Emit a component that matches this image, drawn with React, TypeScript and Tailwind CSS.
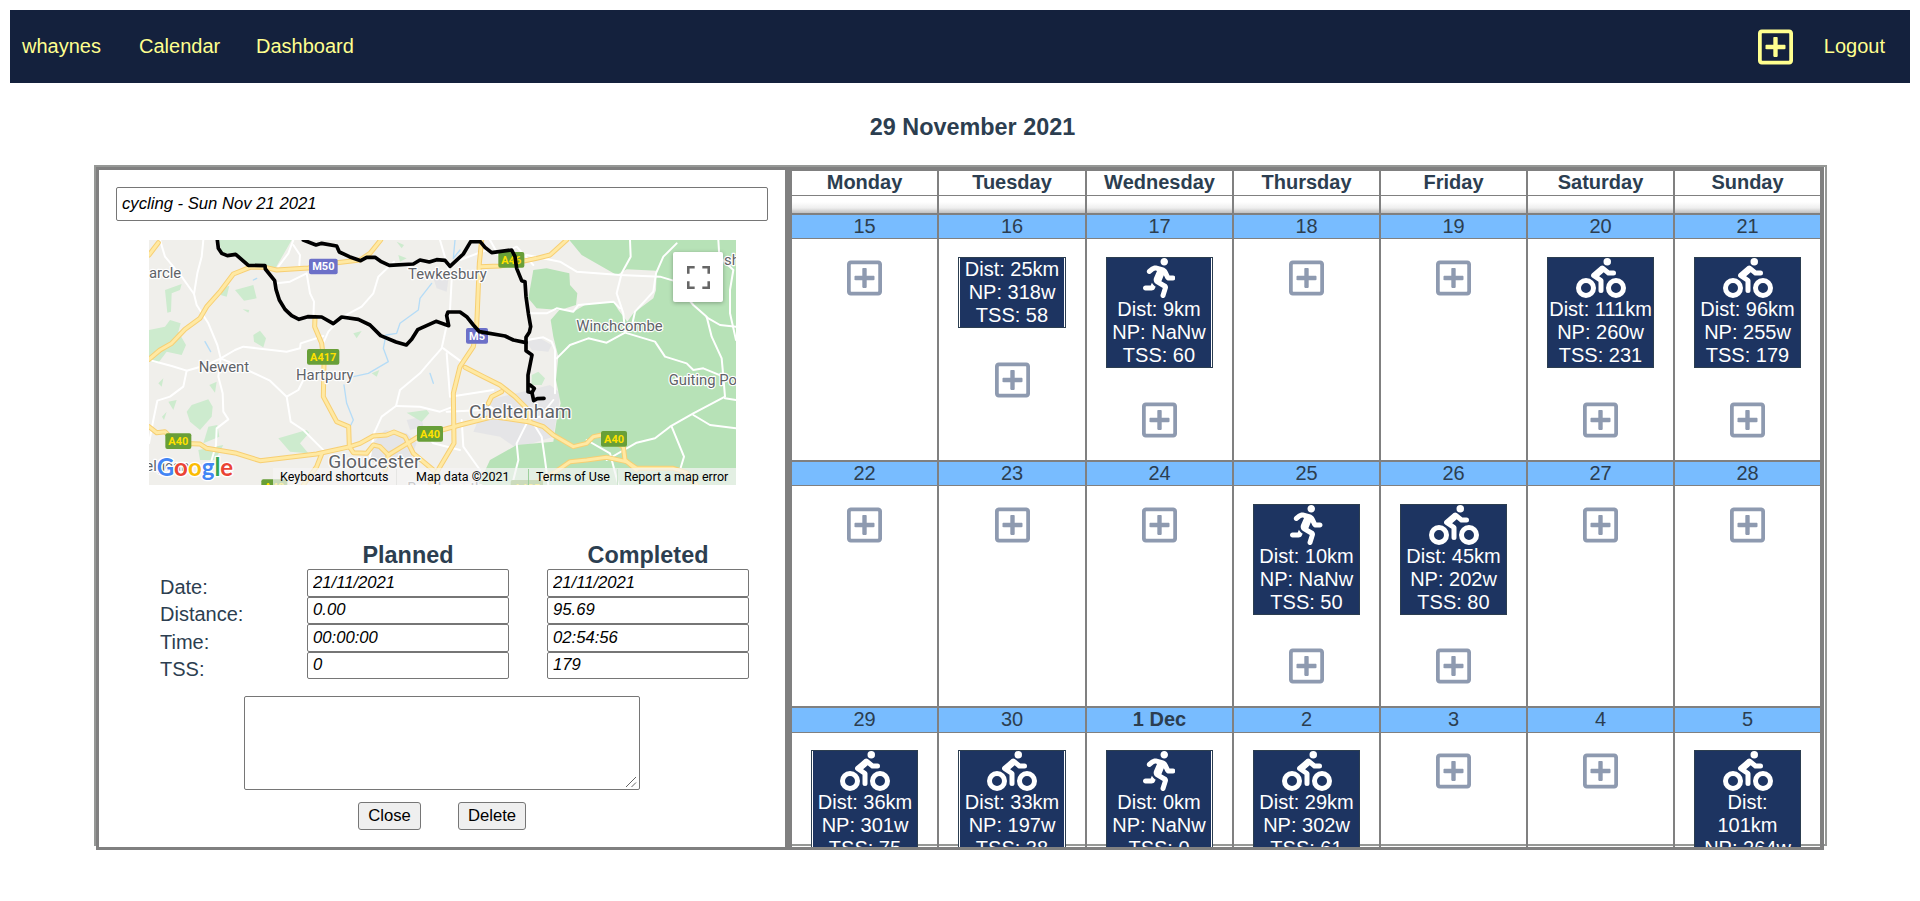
import React from "react";
import { FaBiking, FaRegPlusSquare, FaRunning } from "react-icons/fa";

type Activity = { sport?: "run" | "ride"; lines: string[] };
type Day = { label: string; bold?: boolean; activity?: Activity };
type Week = { head: string; body: string; gap: string; days: Day[] };

const act = (sport: Activity["sport"], ...lines: string[]): Activity => ({ sport, lines });

const WEEKDAYS = ["Monday", "Tuesday", "Wednesday", "Thursday", "Friday", "Saturday", "Sunday"];

const WEEKS: Week[] = [
  {
    head: "h-[26px]",
    body: "h-[221px] pt-[18px]",
    gap: "mb-[31.5px]",
    days: [
      { label: "15" },
      { label: "16", activity: act(undefined, "Dist: 25km", "NP: 318w", "TSS: 58") },
      { label: "17", activity: act("run", "Dist: 9km", "NP: NaNw", "TSS: 60") },
      { label: "18" },
      { label: "19" },
      { label: "20", activity: act("ride", "Dist: 111km", "NP: 260w", "TSS: 231") },
      { label: "21", activity: act("ride", "Dist: 96km", "NP: 255w", "TSS: 179") },
    ],
  },
  {
    head: "h-[26px]",
    body: "h-[220px] pt-[18px]",
    gap: "mb-[30.6px]",
    days: [
      { label: "22" },
      { label: "23" },
      { label: "24" },
      { label: "25", activity: act("run", "Dist: 10km", "NP: NaNw", "TSS: 50") },
      { label: "26", activity: act("ride", "Dist: 45km", "NP: 202w", "TSS: 80") },
      { label: "27" },
      { label: "28" },
    ],
  },
  {
    head: "h-[27px]",
    body: "h-[220px] pt-[17px]",
    gap: "mb-[31.5px]",
    days: [
      { label: "29", activity: act("ride", "Dist: 36km", "NP: 301w", "TSS: 75") },
      { label: "30", activity: act("ride", "Dist: 33km", "NP: 197w", "TSS: 38") },
      { label: "1 Dec", bold: true, activity: act("run", "Dist: 0km", "NP: NaNw", "TSS: 0") },
      { label: "2", activity: act("ride", "Dist: 29km", "NP: 302w", "TSS: 61") },
      { label: "3" },
      { label: "4" },
      { label: "5", activity: act("ride", "Dist:", "101km", "NP: 264w", "TSS: 190") },
    ],
  },
];

const GRID = "grid grid-cols-[147px_148px_147px_147px_147px_147px_145px]";

const CARD_GAPS = ["pl-px", "px-px", "pr-px", "", "", "", ""];

const edge = (i: number) => (i < 6 ? "border-r-2 border-[#808080]" : "");

function ActivityCard({ activity, column, gap }: { activity: Activity; column: number; gap: string }) {
  return (
    <div
      className={`ml-[19px] shrink-0 border border-[#2c3e50] bg-white ${gap} ${column === 1 ? "w-[108px]" : "w-[107px]"} ${CARD_GAPS[column]}`}
    >
      <div className="flex flex-col items-center bg-[#1d3461] text-white">
        {activity.sport === "ride" && <FaBiking className="h-10 w-[50px]" />}
        {activity.sport === "run" && <FaRunning className="h-10 w-[32.5px]" />}
        {activity.lines.map((line) => (
          <span key={line} className="whitespace-nowrap leading-[23px]">
            {line}
          </span>
        ))}
      </div>
    </div>
  );
}

function Calendar() {
  return (
    <section className="h-[683px] w-[1036px] shrink-0 overflow-hidden border-x-4 border-t-4 border-b-[3px] border-[#808080]">
      <div className={GRID}>
        {WEEKDAYS.map((name, i) => (
          <div key={name} className={edge(i)}>
            <div className="h-[25px] border-b border-[#808080] bg-white text-center font-bold leading-[22px]">{name}</div>
            <div className="h-[17px] bg-linear-to-b from-white from-35% via-[#efefef] via-70% to-[#c0c0c0]" />
          </div>
        ))}
      </div>
      {WEEKS.map((week) => (
        <div key={week.days[0].label} className={GRID}>
          {week.days.map((day, i) => (
            <div key={day.label} className={edge(i)}>
              <div
                className={`${week.head} border-t-2 border-b border-[#808080] bg-[#78bcff] text-center leading-[22px] ${day.bold ? "font-bold" : ""}`}
              >
                {day.label}
              </div>
              <div className={`${week.body} flex flex-col`}>
                {day.activity && <ActivityCard activity={day.activity} column={i} gap={week.gap} />}
                <FaRegPlusSquare
                  className={`h-10 w-[35px] shrink-0 self-center text-[#8e9ab0] ${day.activity ? "" : "mt-[0.6px]"}`}
                />
              </div>
            </div>
          ))}
        </div>
      ))}
    </section>
  );
}

const MINOR_ROADS = [
  "M60 30L75 80L125 140L162 192L170 225L205 280L232 345L242 385",
  "M190 30L185 80L172 130L162 192",
  "M460 30L445 70L415 110",
  "M460 45L480 75L478 105",
  "M410 160L450 155L500 130L510 190L522 215L520 265",
  "M762 95L715 140L700 190L665 230L605 262L565 305L545 350",
  "M242 385L285 360L310 350L440 365L480 355L482 340L550 318",
  "M27 390L95 408L140 422L200 405L242 385L300 410L390 452L440 500L452 575L490 600L530 640L555 665",
  "M242 385L235 440L248 490L250 545L265 568L230 595L228 645L215 690",
  "M140 422L130 470L90 500L52 512L40 570L27 640",
  "M440 500L475 480L490 450",
  "M905 355L870 395L840 430L780 480L768 528L725 560L702 610L690 680",
  "M768 528L840 530L900 545L940 530",
  "M910 355L930 370L960 392",
  "M900 30L935 150L930 240L905 355",
  "M840 590L880 640L960 660",
  "M960 90L1040 60",
  "M920 370L930 500L1060 480",
  "M920 545L1030 540",
  "M965 570L970 650L1020 720",
  "M1050 30L1075 75L1130 50L1180 105",
  "M1130 90L1160 75L1260 95L1310 125L1440 135L1560 140L1600 152",
  "M1470 30L1472 80L1445 130L1430 190L1450 250L1455 305",
  "M1610 40L1570 80L1548 130L1540 185L1485 245L1475 290L1455 305",
  "M1160 250L1220 250L1250 235L1300 245L1315 225L1420 215L1440 235",
  "M1250 385L1290 345L1345 325L1400 338L1455 308L1545 335L1575 380L1640 400L1660 420L1690 415L1750 440L1755 500L1660 550L1590 590L1545 625L1490 638L1400 690",
  "M1630 190L1660 225L1700 260L1715 320L1745 385L1750 440",
  "M1735 30L1738 80L1780 120L1770 180L1770 250L1788 330",
  "M1700 262L1740 285L1788 290",
  "M1755 505L1788 510",
  "M1660 555L1710 585L1788 595",
  "M1595 590L1632 680L1620 720",
  "M1160 330L1210 322L1235 335L1245 360L1245 490",
  "M1160 580L1130 640L1135 690L1120 750",
  "M1180 580L1205 620L1215 690L1225 765",
  "M1050 530L1110 570L1200 560L1240 510",
  "M1340 630L1410 670L1435 765",
];

const MAJOR_ROADS = [
  "M27 388L60 360L95 340L135 298L180 265L200 230L240 185L280 132L330 112L375 112L410 120L505 114L590 98L660 90L690 70L722 30",
  "M27 75L55 38",
  "M525 262L524 290L545 340L552 400L550 500L590 575L626 590L628 650",
  "M27 590L50 608L75 605L110 640L180 642L200 655L290 670L360 692L530 672L630 650L660 640L700 618L740 615L762 606L795 620L820 670L880 720",
  "M628 650L640 668L680 670L700 645L720 650L745 675L835 620L960 585L1060 560L1165 575",
  "M545 672L530 710L490 765",
  "M745 675L735 720",
  "M1025 30L1018 100L1010 290L1000 350L960 410L940 490L942 640L900 710L870 765",
  "M1018 110L1080 108L1190 85L1230 75L1280 30",
  "M975 412L1030 440L1080 465L1125 500L1165 540L1170 575",
  "M1045 520L1055 500L1085 485",
  "M1165 575L1210 590L1240 615L1300 650L1340 640L1360 620L1385 615L1420 635L1450 650L1455 690L1490 720",
  "M1170 765L1240 730L1290 695L1340 690L1400 682L1460 695L1490 715L1600 715L1640 728L1670 765",
];

const GREENS = [
  "M237 30L245 70L290 70L325 105L408 112L455 30Z",
  "M1288 30L1325 75L1430 135L1460 118L1550 122L1548 180L1540 205L1480 250L1462 275L1435 240L1420 215L1340 222L1300 245L1260 238L1232 270L1240 320L1255 380L1248 450L1262 520L1250 570L1240 635L1130 645L1050 690L1015 765L1788 765L1788 30Z",
  "M1180 120L1220 115L1288 130L1290 165L1312 190L1308 225L1260 240L1190 235L1165 205Z",
  "M27 300L75 290L90 270L122 280L115 305L138 345L125 375L80 365L55 398L27 395Z",
  "M155 525L205 508L218 530L215 560L180 600L150 575L140 545Z",
  "M205 590L232 585L238 620L190 640Z",
  "M340 315L360 302L378 325L370 352L342 335Z",
  "M75 180L125 162L120 180L95 190L93 245L82 248Z",
  "M245 172L268 168L260 200L242 195Z",
  "M285 180L340 165L350 205L312 212Z",
  "M415 625L500 600L508 608L480 640L505 670L450 665Z",
  "M800 548L860 540L868 550L845 575Z",
  "M640 310L665 303L650 325Z",
  "M695 430L718 420L710 440Z",
  "M770 35L792 45L785 55Z",
  "M775 75L800 85L780 95Z",
  "M1175 435L1195 425L1215 445L1205 465L1175 465Z",
  "M55 460L70 445L65 470Z",
  "M85 515L110 510L100 540Z",
  "M80 545L72 570L66 560Z",
  "M175 660L250 645L225 690L180 690Z",
  "M208 465L230 455L225 488Z",
  "M308 238L328 240L325 248Z",
];

const URBAN = [
  "M735 600L800 610L830 640L815 680L740 720L690 690L700 640Z",
  "M800 570L845 560L850 590L810 600Z",
  "M1040 510L1130 490L1230 465L1262 490L1240 620L1130 655L1080 620L1000 605Z",
  "M1160 335L1200 325L1235 345L1225 365L1175 360Z",
  "M880 145L925 150L920 185L890 175Z",
];

const WATER = [
  "M875 160L840 205L835 240L780 280L770 310L738 315L730 355L745 395L685 430L640 440",
  "M612 465L620 520L640 570L625 600",
  "M945 30L940 85L960 60",
  "M195 335L212 365",
  "M870 430L880 460",
  "M340 150L350 145",
];

const ROUTES = [
  "M232 30L235 55L245 70L262 77L287 73L325 106L375 107L376 117L404 152L408 178L418 210L435 238L455 257L477 268L503 260L545 261L580 281L605 261L655 268L690 285L722 317L768 336L799 345L815 328L833 299L888 274L926 287L920 257L924 246L960 246L980 260L1000 285L1018 305L1095 318L1120 330L1158 338",
  "M490 30L528 45L545 40L590 48L598 66L628 80L662 92L680 82L705 82L722 94L748 106L820 102L840 90L868 96L890 89L915 91L930 109L970 72L992 35L1020 34L1035 52L1055 68L1115 60L1125 80L1130 115L1145 152L1155 155L1158 200L1165 250L1172 290L1168 307L1158 322L1158 362L1176 375L1164 435L1164 485L1176 488L1183 475L1170 465M1176 488L1181 512L1192 506L1212 505",
];

function Shield({ x, y, w, text, motorway }: { x: number; y: number; w: number; text: string; motorway?: boolean }) {
  return (
    <g>
      <rect x={x} y={y} width={w} height={47} rx={6} className={motorway ? "fill-[#6c70c8]" : "fill-[#689f38]"} />
      <text
        x={x + w / 2}
        y={y + 35}
        textAnchor="middle"
        className={`font-[Roboto] text-[33px] font-bold ${motorway ? "fill-white" : "fill-[#ffe100]"}`}
      >
        {text}
      </text>
    </g>
  );
}

function Place({ x, y, text, size = "text-[44.5px]" }: { x: number; y: number; text: string; size?: string }) {
  return (
    <text
      x={x}
      y={y}
      paintOrder="stroke"
      className={`fill-[#5f6368] stroke-white font-[Roboto] stroke-[7px] ${size}`}
      strokeLinejoin="round"
    >
      {text}
    </text>
  );
}

function RouteMap() {
  return (
    <div className="relative ml-[50px] mt-[19px] h-[245px] w-[587px] overflow-hidden">
      <svg viewBox="27 30 1761 735" className="h-[245px] w-[587px]" fill="none" strokeLinejoin="round" strokeLinecap="round">
        <rect x={27} y={30} width={1761} height={735} className="fill-[#f0efeb]" />
        {URBAN.map((d) => (
          <path key={d} d={d} className="fill-[#e5e5e7]" />
        ))}
        {GREENS.map((d, i) => (
          <path key={d} d={d} className={i > 0 && i < 3 ? "fill-[#b7e2b7]" : "fill-[#cdebce]"} />
        ))}
        {WATER.map((d) => (
          <path key={d} d={d} className="stroke-[#b5dcf7] stroke-[4px]" />
        ))}
        {MINOR_ROADS.map((d) => (
          <path key={d} d={d} className="stroke-white stroke-[6px]" />
        ))}
        {MAJOR_ROADS.map((d) => (
          <path key={d} d={d} className="stroke-[#f7cf73] stroke-[15px]" />
        ))}
        {MAJOR_ROADS.map((d) => (
          <path key={d} d={d} className="stroke-[#ffe9a3] stroke-[9px]" />
        ))}
        <Shield x={507} y={86} w={86} text="M50" motorway />
        <Shield x={978} y={294} w={66} text="M5" motorway />
        <Shield x={1075} y={66} w={78} text="A46" />
        <Shield x={501} y={357} w={97} text="A417" />
        <Shield x={76} y={610} w={78} text="A40" />
        <Shield x={831} y={588} w={78} text="A40" />
        <Shield x={1383} y={603} w={78} text="A40" />
        <Shield x={364} y={748} w={78} text="A48" />
        <Shield x={1112} y={750} w={97} text="A435" />
        {ROUTES.map((d) => (
          <path key={d} d={d} className="stroke-black stroke-[11px]" />
        ))}
        <Place x={27} y={144} text="arcle" />
        <Place x={804} y={148} text="Tewkesbury" />
        <Place x={176} y={425} text="Newent" />
        <Place x={468} y={450} text="Hartpury" />
        <Place x={1309} y={302} text="Winchcombe" />
        <Place x={1586} y={464} text="Guiting Power" />
        <Place x={1752} y={104} text="sh" />
        <Place x={987} y={563} text="Cheltenham" size="text-[57.5px]" />
        <Place x={565} y={715} text="Gloucester" size="text-[57.5px]" />
        <Place x={16} y={722} text="elgean" />
        <Place x={802} y={788} text="Brockworth" />
        <text x={50} y={739} paintOrder="stroke" className="stroke-white font-[Lato] text-[72px] font-bold stroke-[8px]">
          <tspan className="fill-[#4285f4]">G</tspan>
          <tspan className="fill-[#ea4335]">o</tspan>
          <tspan className="fill-[#fbbc04]">o</tspan>
          <tspan className="fill-[#4285f4]">g</tspan>
          <tspan className="fill-[#34a853]">l</tspan>
          <tspan className="fill-[#ea4335]">e</tspan>
        </text>
      </svg>
      <div className="absolute right-[13px] top-3 flex size-[50px] items-center justify-center rounded-[2px] bg-white shadow-[0_1px_4px_rgba(0,0,0,0.3)]">
        <svg viewBox="0 0 18 18" className="size-[23px] fill-[#666666]">
          <path d="M0 0v6h2V2h4V0H0zM16 0h-4v2h4v4h2V0h-2zM16 16h-4v2h6v-6h-2v4zM2 12H0v6h6v-2H2v-4z" />
        </svg>
      </div>
      <div className="absolute bottom-0 right-0 flex h-[17px] w-[463px] items-center bg-[#f5f5f5]/70 pt-px font-[Roboto] text-[12.5px] leading-4 text-black">
        <span className="w-[123px] pl-[7px]">Keyboard shortcuts</span>
        <span className="w-[132px] border-l border-[#e6e6e4] pl-[19px]">Map data ©2021</span>
        <span className="w-[89px] border-l border-[#9ccf9c] pl-[7px]">Terms of Use</span>
        <span className="whitespace-nowrap border-l border-[#cfe6cf] pl-[6px]">Report a map error</span>
      </div>
    </div>
  );
}

const FIELDS = [
  { label: "Date:", planned: "21/11/2021", completed: "21/11/2021", row: "h-[28px]", pad: "pt-[7px]" },
  { label: "Distance:", planned: "0.00", completed: "95.69", row: "h-[27px]", pad: "pt-[6px]" },
  { label: "Time:", planned: "00:00:00", completed: "02:54:56", row: "h-[28px]", pad: "pt-[7px]" },
  { label: "TSS:", planned: "0", completed: "179", row: "h-[27px]", pad: "pt-[6px]" },
];

const FIELD_BOX = "block rounded-[2px] border border-[#767676] bg-white px-[5px] text-[16.67px] italic text-black";
const BUTTON = "h-[28px] rounded-[3px] border border-[#767676] bg-[#efefef] text-[16.67px] leading-[24px] text-black";

function DetailPanel() {
  return (
    <section className="h-[683px] w-[692px] shrink-0 border-[3px] border-[#808080] bg-white">
      <input readOnly value="cycling - Sun Nov 21 2021" className={`${FIELD_BOX} ml-[17px] mt-[17px] h-[34px] w-[652px]`} />
      <RouteMap />
      <div className="mt-[57px] flex h-[27px] text-[23.4px] font-bold leading-[26px]">
        <h3 className="ml-[208px] w-[202px] text-center">Planned</h3>
        <h3 className="ml-[38px] w-[202px] text-center">Completed</h3>
      </div>
      {FIELDS.map((f) => (
        <div key={f.label} className={`flex ${f.row}`}>
          <label className={`ml-[61px] w-[147px] leading-[23px] ${f.pad}`}>{f.label}</label>
          <input readOnly value={f.planned} className={`${FIELD_BOX} ${f.row} w-[202px] pb-px`} />
          <input readOnly value={f.completed} className={`${FIELD_BOX} ${f.row} ml-[38px] w-[202px] pb-px`} />
        </div>
      ))}
      <div className="relative ml-[145px] mt-[17px] h-[94px] w-[396px] rounded-[2px] border border-[#767676]">
        <svg viewBox="0 0 12 12" className="absolute bottom-px right-0.5 size-3 stroke-[#666666]" fill="none">
          <path d="M1 11L11 1M6.500 11L11 6.500" />
        </svg>
      </div>
      <div className="ml-[259px] mt-[12px] flex gap-[37px]">
        <button className={`${BUTTON} w-[63px]`}>Close</button>
        <button className={`${BUTTON} w-[68px]`}>Delete</button>
      </div>
    </section>
  );
}

export default function App() {
  return (
    <div className="h-[901px] overflow-hidden bg-white px-2.5 pt-2.5 font-['Liberation_Sans',sans-serif] text-[20px] text-[#2c3e50]">
      <nav className="flex h-[73px] items-center bg-[#14213d] text-[#ffff8f]">
        <a className="ml-3 w-[117px] pb-0.5">whaynes</a>
        <a className="w-[117px] pb-0.5">Calendar</a>
        <a className="pb-0.5">Dashboard</a>
        <FaRegPlusSquare className="ml-auto mr-[31px] h-10 w-[35px]" />
        <a className="mr-[25px] pb-0.5">Logout</a>
      </nav>
      <h1 className="mt-[30px] pl-[25px] text-center text-[23.4px] font-bold leading-7">29 November 2021</h1>
      <main className="ml-[84px] mt-[24px] flex h-[681px] w-[1733px] border-2 border-[#969896]">
        <DetailPanel />
        <Calendar />
      </main>
    </div>
  );
}
